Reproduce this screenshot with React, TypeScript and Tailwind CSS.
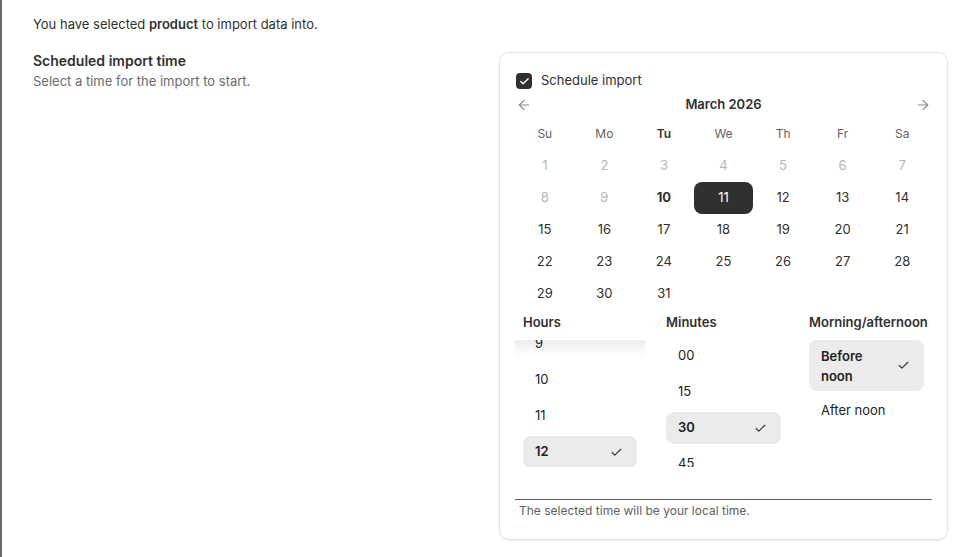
import { ArrowLeft, ArrowRight, Check } from 'lucide-react';

const weekdays = ['Su', 'Mo', 'Tu', 'We', 'Th', 'Fr', 'Sa'];

const weeks: (number | null)[][] = [
  [1, 2, 3, 4, 5, 6, 7],
  [8, 9, 10, 11, 12, 13, 14],
  [15, 16, 17, 18, 19, 20, 21],
  [22, 23, 24, 25, 26, 27, 28],
  [29, 30, 31, null, null, null, null],
];

const today = 10;
const selectedDay = 11;

function OptionItem({
  label,
  selected,
  tall,
}: {
  label: React.ReactNode;
  selected?: boolean;
  tall?: boolean;
}) {
  return (
    <div
      className={`mx-2 mb-1 flex items-center justify-between rounded-lg pl-3 pr-[14px] text-[13px] text-[#222] ${
        tall ? 'h-[51px] leading-[20px]' : 'h-[32px]'
      } ${selected ? 'bg-[#ebebeb] font-semibold' : ''}`}
    >
      <span>{label}</span>
      {selected && <Check size={13} strokeWidth={2} className="text-[#333]" />}
    </div>
  );
}

export default function App() {
  return (
    <div
      className="min-h-[557px] border-l-2 border-[#6b6b6b] bg-white pl-[31px] pr-[33px] pt-[15px] text-[#303030]"
      style={{ fontFamily: 'Inter, "Noto Sans", sans-serif' }}
    >
      <p className="text-[13px] leading-[18px]">
        You have selected <span className="font-semibold">product</span> to import data into.
      </p>

      <div className="mt-[18px] flex justify-between">
        <div>
          <h3 className="text-[14px] font-semibold leading-[20px] text-[#303030]">
            Scheduled import time
          </h3>
          <p className="text-[13px] leading-[20px] text-[#6b6b6b]">
            Select a time for the import to start.
          </p>
        </div>

        <div className="mt-px mr-[-2px] w-[449px] rounded-[10px] border border-[#e3e3e3] px-[15px] pt-[20px] pb-[19px] shadow-[0_1px_2px_rgba(0,0,0,0.08)]">
          {/* Checkbox */}
          <label className="flex h-[16px] items-center gap-[9px] pl-px text-[13px] text-[#303030]">
            <span className="flex h-[16px] w-[16px] items-center justify-center rounded-[4px] bg-[#303030]">
              <Check size={11} strokeWidth={3} className="text-white" />
            </span>
            Schedule import
          </label>

          {/* Month nav */}
          <div className="mt-[5px] flex h-[22px] items-center justify-between px-[1px]">
            <ArrowLeft size={16} strokeWidth={1.75} className="text-[#8a8a8a]" />
            <span className="text-[13px] font-semibold text-[#303030]">March 2026</span>
            <ArrowRight size={16} strokeWidth={1.75} className="text-[#8a8a8a]" />
          </div>

          {/* Calendar */}
          <div className="mt-[2px] grid grid-cols-7">
            {weekdays.map((d) => (
              <div
                key={d}
                className={`flex h-[32px] items-center justify-center text-[12px] ${
                  d === 'Tu' ? 'font-semibold text-[#303030]' : 'text-[#616161]'
                }`}
              >
                {d}
              </div>
            ))}
            {weeks.flat().map((day, i) => {
              if (day === null) return <div key={i} className="h-[32px]" />;
              const isSelected = day === selectedDay;
              const isPast = day < today;
              const isToday = day === today;
              return (
                <div
                  key={i}
                  className={`flex h-[32px] items-center justify-center rounded-lg text-[13px] ${
                    isSelected
                      ? 'bg-[#303030] text-white'
                      : isPast
                        ? 'text-[#b5b5b5]'
                        : isToday
                          ? 'font-bold text-[#303030]'
                          : 'text-[#303030]'
                  }`}
                >
                  {day}
                </div>
              );
            })}
          </div>

          {/* Time pickers */}
          <div className="mt-[2px] grid grid-cols-[143px_143px_1fr]">
            <div>
              <div className="h-[20px] pl-2 text-[13px] font-semibold leading-[20px] text-[#303030]">
                Hours
              </div>
              <div className="relative mt-2 h-[127px] w-[130px] overflow-hidden">
                <div className="pointer-events-none absolute inset-x-0 top-0 h-[18px] bg-gradient-to-b from-[#ededed] to-white/0" />
                <div className="relative -mt-[12px]">
                  <OptionItem label="9" />
                  <OptionItem label="10" />
                  <OptionItem label="11" />
                  <OptionItem label="12" selected />
                </div>
              </div>
            </div>

            <div>
              <div className="h-[20px] pl-2 text-[13px] font-semibold leading-[20px] text-[#303030]">
                Minutes
              </div>
              <div className="mt-2 h-[127px] w-[131px] overflow-hidden">
                <OptionItem label="00" />
                <OptionItem label="15" />
                <OptionItem label="30" selected />
                <OptionItem label="45" />
              </div>
            </div>

            <div>
              <div className="h-[20px] whitespace-nowrap pl-2 text-[13px] font-semibold leading-[20px] text-[#303030]">
                Morning/afternoon
              </div>
              <div className="mt-2 w-[131px]">
                <OptionItem
                  label={
                    <>
                      Before
                      <br />
                      noon
                    </>
                  }
                  selected
                  tall
                />
                <OptionItem label="After noon" />
              </div>
            </div>
          </div>

          {/* Footer */}
          <div className="mt-[32px] border-t border-[#616161] px-1 pt-[2px] text-[12px] leading-[18px] text-[#616161]">
            The selected time will be your local time.
          </div>
        </div>
      </div>
    </div>
  );
}
